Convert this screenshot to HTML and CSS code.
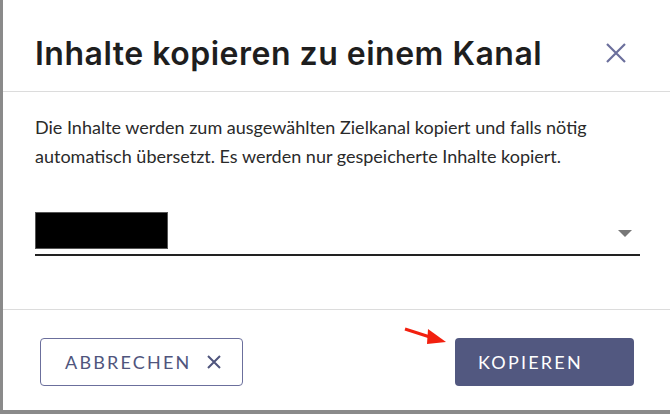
FILE: index.html
```html
<!DOCTYPE html>
<html lang="de">
<head>
<meta charset="utf-8">
<link rel="stylesheet" href="styles.css">
</head>
<body>
<div class="dialog">
  <header class="head">
    <h1 class="title">Inhalte kopieren zu einem Kanal</h1>
    <svg class="close" width="22" height="22" viewBox="0 0 22 22"><path d="M2 2L20 20M20 2L2 20" stroke="#6b6f9c" stroke-width="2.2" fill="none"/></svg>
  </header>
  <section class="content">
    <p class="desc">Die Inhalte werden zum ausgewählten Zielkanal kopiert und falls nötig automatisch übersetzt. Es werden nur gespeicherte Inhalte kopiert.</p>
    <div class="select">
      <span class="redact"></span>
      <span class="caret"></span>
    </div>
  </section>
  <footer class="foot">
    <button class="btn cancel">ABBRECHEN <svg width="14" height="14" viewBox="0 0 14 14"><path d="M1 1L13 13M13 1L1 13" stroke="#4f557d" stroke-width="2" fill="none"/></svg></button>
    <div class="right">
      <svg class="arrow" width="46" height="22" viewBox="0 0 46 22"><path d="M2 4L30 13" stroke="#f2200f" stroke-width="3" fill="none"/><path d="M25 4L43 17L24 19Z" fill="#f2200f"/></svg>
      <button class="btn primary">KOPIEREN</button>
    </div>
  </footer>
</div>
</body>
</html>
```
FILE: styles.css
```css
html, body { margin: 0; padding: 0; }
body {
  width: 670px;
  height: 414px;
  background: #8a8a8a;
  padding: 0 0 4px 3px;
  box-sizing: border-box;
  overflow: hidden;
}
.dialog {
  background: #fff;
  height: 410px;
  display: flex;
  flex-direction: column;
}
.head {
  height: 92px;
  border-bottom: 1px solid #dcdcdc;
  display: flex;
  align-items: center;
  justify-content: space-between;
  padding: 12px 43px 0 32px;
  box-sizing: border-box;
  flex: none;
}
.title {
  margin: 0;
  font-family: Inter, "Open Sans", sans-serif;
  font-weight: 600;
  font-size: 32px;
  color: #1e1e1e;
  letter-spacing: 0.5px;
  padding-top: 4px;
}
.close { margin-top: 2px; }
.content {
  flex: 1;
  padding: 21px 30px 0 32px;
  border-bottom: 1px solid #dcdcdc;
}
.desc {
  margin: 0;
  font-family: Lato, "Open Sans", sans-serif;
  font-size: 18px;
  line-height: 29px;
  color: #2a2a2a;
}
.select {
  margin-top: 41px;
  height: 42px;
  border-bottom: 2px solid #222;
  display: flex;
  align-items: flex-start;
  justify-content: space-between;
}
.redact {
  width: 133px;
  height: 37px;
  background: #000;
  border: 1px solid #555;
  box-sizing: border-box;
}
.caret {
  margin-top: 18px;
  margin-right: 8px;
  width: 0;
  height: 0;
  border-left: 7px solid transparent;
  border-right: 7px solid transparent;
  border-top: 7px solid #777;
}
.foot {
  height: 100px;
  flex: none;
  display: flex;
  align-items: flex-start;
  justify-content: space-between;
  padding: 28px 36px 0 37px;
  box-sizing: border-box;
}
.btn {
  height: 48px;
  border-radius: 4px;
  font-family: Lato, "Open Sans", sans-serif;
  font-size: 18px;
  letter-spacing: 2.2px;
  display: flex;
  align-items: center;
  box-sizing: border-box;
  cursor: pointer;
}
.cancel {
  width: 203px;
  background: #fff;
  border: 1.5px solid #6b6f9c;
  color: #4f557d;
  padding: 0 0 0 24px;
  gap: 15px;
}
.right {
  display: flex;
  align-items: flex-start;
  position: relative;
}
.arrow {
  position: absolute;
  left: -52px;
  top: -13px;
}
.primary {
  width: 179px;
  background: #525880;
  border: none;
  color: #fff;
  padding: 0 0 0 23px;
}
```
